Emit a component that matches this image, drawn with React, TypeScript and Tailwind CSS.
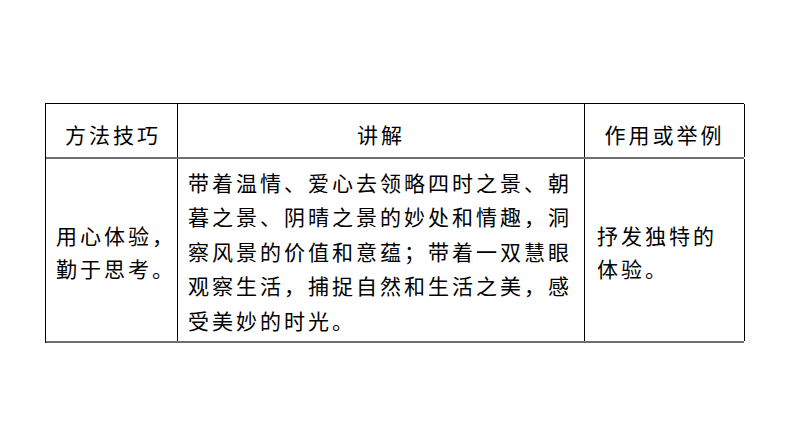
import React from "react";

const font = { fontFamily: '"Noto Sans CJK SC", "Noto Sans", sans-serif' };

export default function App() {
  const mid = [
    "带着温情、爱心去领略四时之景、朝",
    "暮之景、阴晴之景的妙处和情趣，洞",
    "察风景的价值和意蕴；带着一双慧眼",
    "观察生活，捕捉自然和生活之美，感",
    "受美妙的时光。",
  ];
  return (
    <div className="w-[794px] h-[447px] bg-white pt-[103px] pl-[45px]" style={font}>
      <div className="w-[699px] border-t border-l border-black text-black text-[21px] tracking-[3px] leading-[34px]">
        <div className="grid grid-cols-[132px_407px_160px] h-[55px] border-b-2 border-[#6f6f6f]">
          <div className="border-r border-black flex items-center pl-[19px] pt-[6px]">方法技巧</div>
          <div className="border-r border-black flex items-center justify-center pt-[6px]">讲解</div>
          <div className="border-r border-black flex items-center justify-center pt-[6px]">作用或举例</div>
        </div>
        <div className="grid grid-cols-[132px_407px_160px] h-[184px] border-b-2 border-[#6f6f6f]">
          <div className="border-r border-black flex flex-col justify-center pl-[10px] leading-[33px] pt-[3px]">
            <div>用心体验，</div>
            <div>勤于思考。</div>
          </div>
          <div className="border-r border-black flex flex-col justify-center pl-[10px] leading-[34.5px] pt-[2px]">
            {mid.map((l) => (
              <div key={l} className="whitespace-nowrap">{l}</div>
            ))}
          </div>
          <div className="border-r border-black flex flex-col justify-center pl-[12px] leading-[33px] pt-[3px]">
            <div>抒发独特的</div>
            <div>体验。</div>
          </div>
        </div>
      </div>
    </div>
  );
}
